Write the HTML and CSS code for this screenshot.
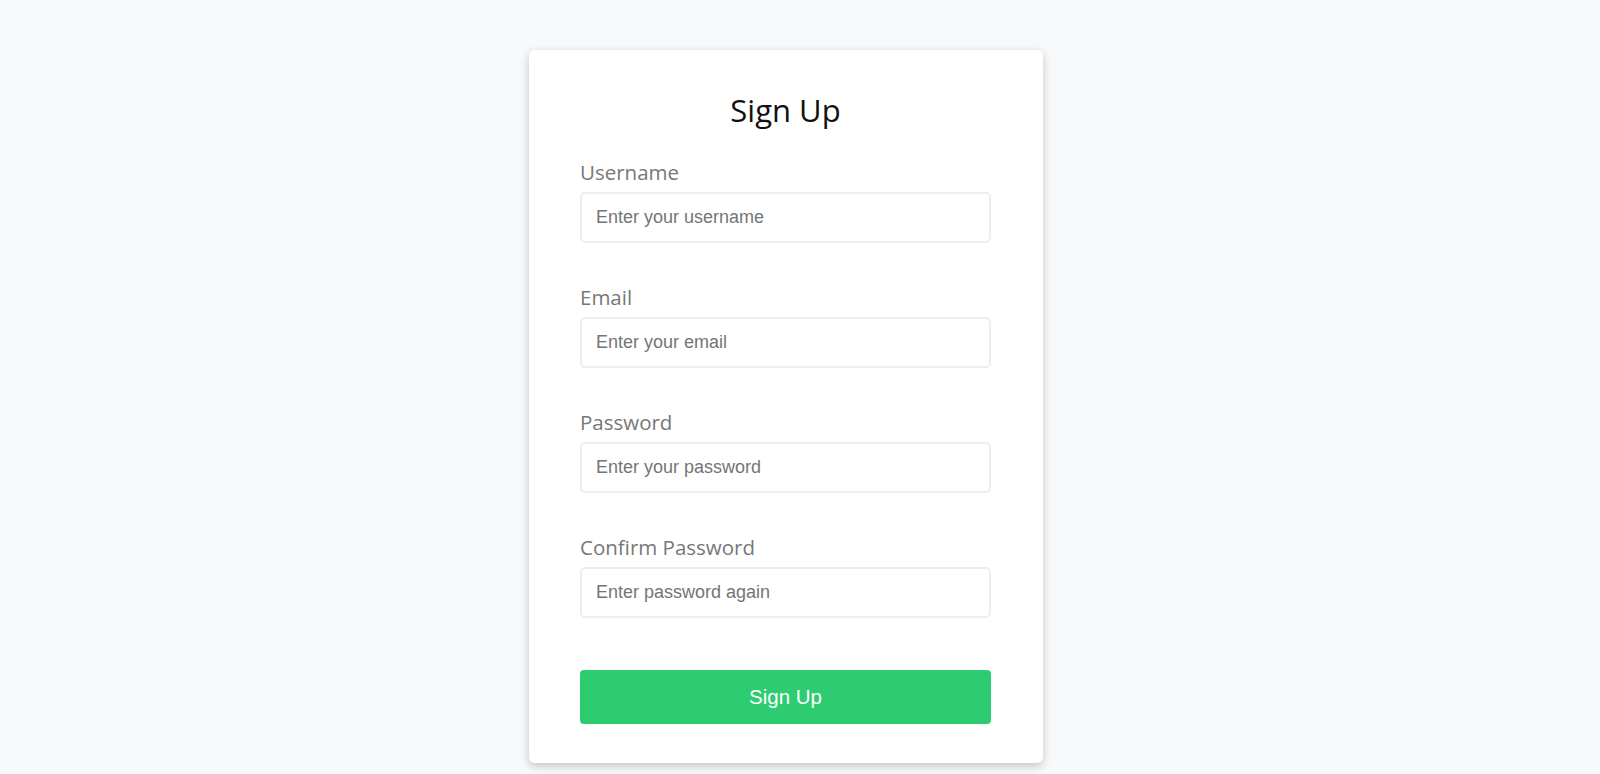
FILE: index.html
```html
<!DOCTYPE html>
<html lang="en">
<head>
<meta charset="utf-8">
<title>Sign Up</title>
<link rel="stylesheet" href="styles.css">
</head>
<body>
<div class="page">
  <form class="card">
    <h2 class="title">Sign Up</h2>
    <div class="group">
      <label class="label" for="u">Username</label>
      <input class="input" id="u" type="text" placeholder="Enter your username">
    </div>
    <div class="group">
      <label class="label" for="e">Email</label>
      <input class="input" id="e" type="email" placeholder="Enter your email">
    </div>
    <div class="group">
      <label class="label" for="p">Password</label>
      <input class="input" id="p" type="password" placeholder="Enter your password">
    </div>
    <div class="group">
      <label class="label" for="c">Confirm Password</label>
      <input class="input" id="c" type="password" placeholder="Enter password again">
    </div>
    <button class="btn" type="button">Sign Up</button>
  </form>
</div>
</body>
</html>
```

FILE: styles.css
```css
* { box-sizing: border-box; }
html, body { margin: 0; padding: 0; }
body {
  background: #f8f9fb;
  font-family: "Open Sans", "Liberation Sans", sans-serif;
  height: 774px;
  overflow: hidden;
}
.page {
  display: flex;
  justify-content: center;
  padding: 50px 28px 0 0;
}
.card {
  width: 514px;
  background: #fff;
  border-radius: 6px;
  box-shadow: 0 3px 10px rgba(0,0,0,0.22);
  padding: 38px 52px 39px 51px;
  display: flex;
  flex-direction: column;
}
.title {
  margin: 0 0 25px;
  text-align: center;
  font-size: 31px;
  font-weight: 400;
  line-height: 44px;
  color: #111;
}
.group {
  display: flex;
  flex-direction: column;
  margin-bottom: 39px;
}
.group:last-of-type { margin-bottom: 52px; }
.label {
  font-size: 20.5px;
  line-height: 30px;
  color: #777777;
  margin-bottom: 5px;
}
.input {
  height: 51px;
  border: 2px solid #eeeeee;
  border-radius: 5px;
  padding: 0 14px;
  font-family: "Liberation Sans", Arial, sans-serif;
  font-size: 18px;
  color: #333;
  outline: none;
  background: #fff;
}
.input::placeholder { color: #757575; }
.btn {
  height: 54px;
  border: none;
  border-radius: 4px;
  background: #2ecc71;
  color: #fff;
  font-family: "Liberation Sans", Arial, sans-serif;
  font-size: 20.5px;
  cursor: pointer;
}
```
